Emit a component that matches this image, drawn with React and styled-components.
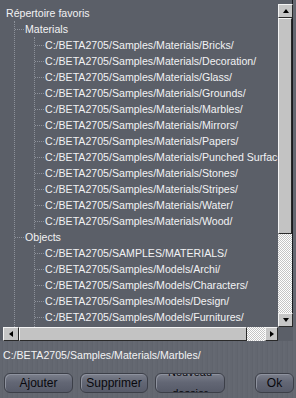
import React from "react";
import styled, { createGlobalStyle } from "styled-components";

const Global = createGlobalStyle`
  html, body { margin: 0; padding: 0; background: #62666f; }
  * { box-sizing: border-box; }
`;

const Page = styled.div`
  width: 296px;
  height: 398px;
  display: flex;
  flex-direction: column;
  font-family: "Liberation Sans", Arial, sans-serif;
  font-size: 10.6px;
  color: #f2f2f4;
  background: repeating-linear-gradient(90deg, #636770 0 2px, #60646d 2px 3px, #656972 3px 5px);
  overflow: hidden;
`;

const ListFrame = styled.div`
  display: grid;
  grid-template-columns: 1fr 15px;
  grid-template-rows: 327px 14px;
  margin-right: 3px;
  background: #5b5f68;
`;

const TreeArea = styled.div`
  overflow: hidden;
  padding: 5px 0 0 6px;
  white-space: nowrap;
`;

const Row = styled.div`
  height: 16px;
  line-height: 16px;
  position: relative;
`;

const Branch = styled.div`
  margin-left: ${({ $offset }) => $offset}px;
  border-left: 1px dotted #8d919a;
`;

const Leaf = styled(Row)`
  padding-left: 10px;
  &::before {
    content: "";
    position: absolute;
    left: 0;
    top: 8px;
    width: 9px;
    border-top: 1px dotted #8d919a;
  }
`;

const VScroll = styled.div`
  display: flex;
  flex-direction: column;
  padding-top: 4px;
  border-right: 1px solid #1a1a1e;
`;

const HScroll = styled.div`
  display: flex;
  margin-left: 3px;
`;

const Checker = styled.div`
  flex: 1;
  background: repeating-conic-gradient(#ffffff 0 25%, #c4c4c4 0 50%) 0 0 / 2px 2px;
`;

const ScrollBtn = styled.div`
  width: ${({ $w }) => $w || 14}px;
  height: 14px;
  flex: none;
  background: #c6c6c6;
  border-top: 1px solid #f4f4f4;
  border-left: 1px solid #f4f4f4;
  border-right: 1px solid #2a2a2a;
  border-bottom: 1px solid #2a2a2a;
  display: flex;
  align-items: center;
  justify-content: center;
`;

const Thumb = styled.div`
  flex: none;
  ${({ $horizontal, $size }) => $horizontal ? `width: ${$size}px;` : `height: ${$size}px;`}
  background: #c3c3c3;
  border-top: 1px solid #f4f4f4;
  border-left: 1px solid #f4f4f4;
  border-right: 1px solid #2a2a2a;
  border-bottom: 1px solid #2a2a2a;
`;

const Corner = styled.div`
  background: #5b5f68;
`;

const Status = styled.div`
  height: 16px;
  line-height: 16px;
  margin-top: 6px;
  padding-left: 3px;
  white-space: nowrap;
`;

const ButtonBar = styled.div`
  display: flex;
  align-items: center;
  margin-top: 10px;
  padding: 0 2px 0 4px;
  gap: 7px;
`;

const Button = styled.div`
  width: ${({ $w }) => $w}px;
  height: 20px;
  margin-left: ${({ $ml }) => $ml || 0}px;
  border-radius: 6px;
  border: 1px solid #3c3f48;
  background: linear-gradient(#7c808c, #636775 45%, #575b69);
  box-shadow: inset 1px 1px 0 #8e929e;
  color: #08080c;
  font-size: 12px;
  display: flex;
  align-items: center;
  justify-content: center;
  overflow: hidden;
`;

const Stacked = styled.div`
  display: flex;
  flex-direction: column;
  align-items: center;
  font-size: 11px;
  line-height: 21px;
`;

const Arrow = ({ dir }) => {
  const pts = {
    up: "1,6 4,2 7,6",
    down: "1,2 4,6 7,2",
    left: "6,1 2,4 6,7",
    right: "2,1 6,4 2,7",
  }[dir];
  return (
    <svg width="8" height="8" viewBox="0 0 8 8">
      <polygon points={pts} fill="#000" />
    </svg>
  );
};

const materials = [
  "Bricks", "Decoration", "Glass", "Grounds", "Marbles", "Mirrors", "Papers",
  "Punched Surfaces", "Stones", "Stripes", "Water", "Wood",
];
const objects = [
  "C:/BETA2705/SAMPLES/MATERIALS/",
  "C:/BETA2705/Samples/Models/Archi/",
  "C:/BETA2705/Samples/Models/Characters/",
  "C:/BETA2705/Samples/Models/Design/",
  "C:/BETA2705/Samples/Models/Furnitures/",
  "C:/BETA2705/Samples/Models/Lights/",
];

export default function App() {
  return (
    <Page>
      <Global />
      <ListFrame>
        <TreeArea>
          <Row>Répertoire favoris</Row>
          <Branch $offset={8}>
            <Leaf>Materials</Leaf>
            <Branch $offset={19}>
              {materials.map((m) => (
                <Leaf key={m}>C:/BETA2705/Samples/Materials/{m}/</Leaf>
              ))}
            </Branch>
            <Leaf>Objects</Leaf>
            <Branch $offset={19}>
              {objects.map((o) => (
                <Leaf key={o}>{o}</Leaf>
              ))}
            </Branch>
          </Branch>
        </TreeArea>
        <VScroll>
          <ScrollBtn $w={15}><Arrow dir="up" /></ScrollBtn>
          <Thumb $size={216} />
          <Checker />
          <ScrollBtn $w={15}><Arrow dir="down" /></ScrollBtn>
        </VScroll>
        <HScroll>
          <ScrollBtn $w={16}><Arrow dir="left" /></ScrollBtn>
          <Thumb $horizontal $size={228} />
          <Checker />
          <ScrollBtn $w={13}><Arrow dir="right" /></ScrollBtn>
        </HScroll>
        <Corner />
      </ListFrame>
      <Status>C:/BETA2705/Samples/Materials/Marbles/</Status>
      <ButtonBar>
        <Button $w={69}>Ajouter</Button>
        <Button $w={68}>Supprimer</Button>
        <Button $w={70}>
          <Stacked>
            <span>Nouveau</span>
            <span>dossier</span>
          </Stacked>
        </Button>
        <Button $w={39} $ml={23}>Ok</Button>
      </ButtonBar>
    </Page>
  );
}
